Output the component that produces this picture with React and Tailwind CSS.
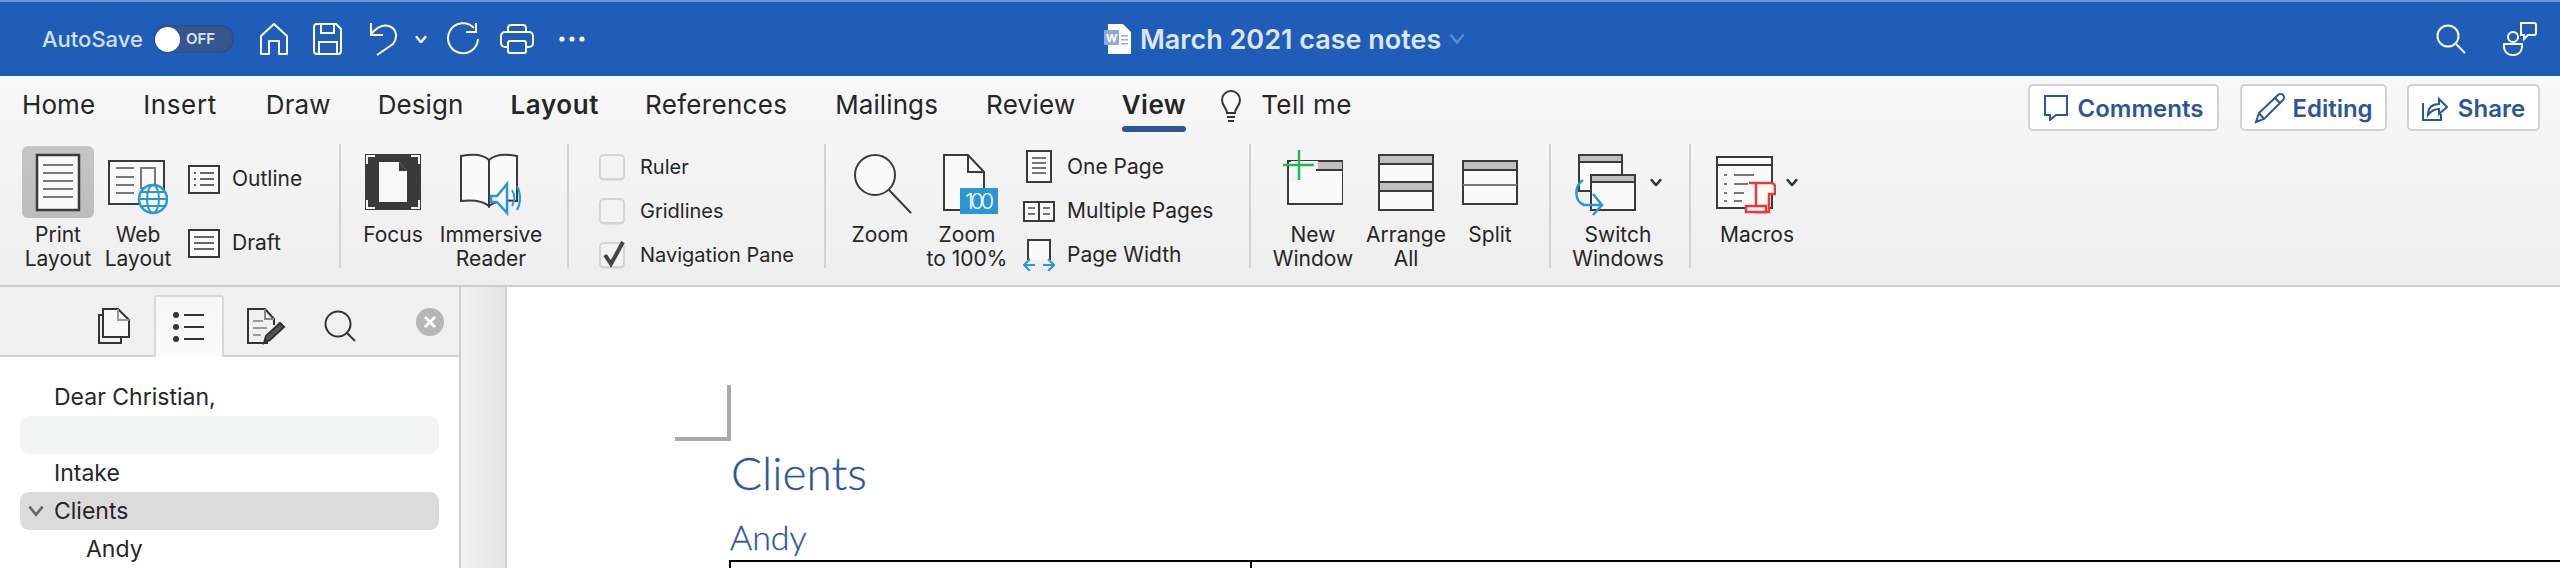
import React from 'react';

const ink = '#3a3a3a';
const blue = '#2a96d8';

function Icon({ w, h = 72, children, className = '' }) {
  return (
    <svg width={w} height={h} viewBox={`0 0 ${w} ${h}`} fill="none" className={`shrink-0 ${className}`}>
      {children}
    </svg>
  );
}

function Chevron({ size = 12, color = '#333', width = 2.5 }) {
  return (
    <svg width={size} height={size * 0.7} viewBox="0 0 12 8" fill="none" className="shrink-0">
      <path d="M1 1l5 6 5-6" stroke={color} strokeWidth={width} />
    </svg>
  );
}

function Separator({ className = '' }) {
  return <div className={`w-[2px] h-[124px] bg-[#d2d2d2] shrink-0 ${className}`} />;
}

// big ribbon button: icon on top, one or two label lines below
function BigButton({ width, lines, selected, children }) {
  return (
    <div className={`flex flex-col items-center shrink-0 ${width}`}>
      <div className={`h-[72px] mt-[2px] flex items-center justify-center rounded-[6px] ${selected ? 'w-[72px] bg-gradient-to-b from-[#c6c6c6] to-[#bcbcbc]' : ''}`}>
        {children}
      </div>
      <div className="mt-[5px] text-center text-[21px] leading-[24px] text-[#262626]">
        {lines.map((l) => (
          <div key={l} className="whitespace-nowrap">{l}</div>
        ))}
      </div>
    </div>
  );
}

function SmallRow({ icon, label, className = '' }) {
  return (
    <div className={`flex items-center h-[44px] ${className}`}>
      <div className="w-[38px] flex justify-center shrink-0">{icon}</div>
      <span className="ml-[9px] text-[21px] text-[#262626] whitespace-nowrap">{label}</span>
    </div>
  );
}

function CheckRow({ label, checked }) {
  return (
    <div className="flex items-center h-[44px]">
      <div className="relative w-[26px] h-[26px] rounded-[5px] border-2 border-[#d4d4d4] bg-[#f3f3f3] shadow-[0_1px_1px_#ddd] shrink-0">
        {checked && (
          <svg width="28" height="32" viewBox="0 0 28 32" fill="none" className="absolute left-[-1px] top-[-7px]">
            <path d="M5 18l6 9L23 5" stroke="#444" strokeWidth="4" />
          </svg>
        )}
      </div>
      <span className="ml-[15px] text-[20px] text-[#262626] whitespace-nowrap">{label}</span>
    </div>
  );
}

function TitleBar() {
  return (
    <div className="h-[76px] bg-[#1f5db8] border-t-2 border-[#6b96d4] flex items-center text-white shrink-0">
      <span className="ml-[42px] text-[22px] font-medium text-[#d4e0f3]">AutoSave</span>
      <div className="ml-[11px] w-[80px] h-[28px] rounded-full bg-[#35578d] flex items-center pl-[1px] shadow-[inset_0_0_2px_#1c3360]">
        <div className="w-[25px] h-[25px] rounded-full bg-white" />
        <span className="ml-[6px] text-[15px] font-semibold text-[#dbe4f2]">OFF</span>
      </div>

      {/* quick access */}
      <svg width="32" height="34" viewBox="0 0 32 34" fill="none" stroke="#fff" strokeWidth="2" className="ml-[24px]">
        <path d="M3 32V14L16 2l13 12v18h-8V19h-10v13z" strokeLinejoin="round" />
      </svg>
      <svg width="30" height="32" viewBox="0 0 30 32" fill="none" stroke="#fff" strokeWidth="2" className="ml-[23px]">
        <path d="M3 1h20l5 5v22a3 3 0 01-3 3H4a3 3 0 01-3-3V4a3 3 0 012-3z" />
        <path d="M8 1v9h13V1M6 31V19h18v12" />
      </svg>
      <svg width="30" height="34" viewBox="0 0 30 34" fill="none" stroke="#fff" strokeWidth="2" className="ml-[26px]">
        <path d="M2 1v12h12M2 12C8 5 14 2 20 4c8 3 9 12 4 18L8 33" />
      </svg>
      <div className="ml-[16px]"><Chevron color="#fff" /></div>
      <svg width="34" height="34" viewBox="0 0 34 34" fill="none" stroke="#fff" strokeWidth="2" className="ml-[19px]">
        <path d="M28 6A15 15 0 1032 17M30 1v9h-10" />
      </svg>
      <svg width="34" height="30" viewBox="0 0 34 30" fill="none" stroke="#fff" strokeWidth="2" className="ml-[20px]">
        <path d="M8 8V4a3 3 0 013-3h12a3 3 0 013 3v4" />
        <path d="M8 23H5a4 4 0 01-4-4V12a4 4 0 014-4h24a4 4 0 014 4v7a4 4 0 01-4 4h-3" />
        <rect x="8" y="17" width="18" height="12" rx="2" />
      </svg>
      <svg width="26" height="6" viewBox="0 0 26 6" fill="#fff" className="ml-[25px]">
        <circle cx="3" cy="3" r="2.6" /><circle cx="13" cy="3" r="2.6" /><circle cx="23" cy="3" r="2.6" />
      </svg>

      {/* document title */}
      <svg width="28" height="30" viewBox="0 0 28 30" className="ml-[519px]">
        <path d="M4 0h15l8 8v22H4z" fill="#fff" />
        <rect x="0" y="6" width="15" height="15" rx="1" fill="#8ea9dc" />
        <rect x="17" y="11" width="7" height="1.5" fill="#8ea9dc" />
        <rect x="17" y="15" width="7" height="1.5" fill="#8ea9dc" />
        <rect x="17" y="19" width="7" height="1.5" fill="#8ea9dc" />
        <text x="2" y="18" fontSize="11" fontWeight="700" fill="#fff" fontFamily="Inter, sans-serif">W</text>
      </svg>
      <span className="ml-[8px] mt-[2px] text-[27px] font-semibold text-[#dde6f5] whitespace-nowrap">March 2021 case notes</span>
      <div className="ml-[8px]"><Chevron size={16} color="#5d8bd0" width={1.8} /></div>

      <div className="ml-auto flex items-center">
        <svg width="30" height="30" viewBox="0 0 30 30" fill="none" stroke="#fff" strokeWidth="2">
          <circle cx="12" cy="12" r="10.5" /><path d="M20 20l9 9" />
        </svg>
        <svg width="34" height="34" viewBox="0 0 34 34" fill="none" stroke="#fff" strokeWidth="2" className="ml-[37px] mr-[23px]">
          <circle cx="10" cy="15" r="5" />
          <path d="M1 22h18v3a8 8 0 01-8 8H9a8 8 0 01-8-8z" />
          <path d="M18 1h13a2 2 0 012 2v8a2 2 0 01-2 2h-6l-4 4v-4h-3z" />
        </svg>
      </div>
    </div>
  );
}

function Tabs() {
  const tabs = [
    ['Home', 'ml-[22px]'],
    ['Insert', 'ml-[48px] tracking-[0.6px]'],
    ['Draw', 'ml-[49px]'],
    ['Design', 'ml-[47px]'],
    ['Layout', 'ml-[47px] font-semibold tracking-[0.6px]'],
    ['References', 'ml-[46px] tracking-[0.3px]'],
    ['Mailings', 'ml-[48px]'],
    ['Review', 'ml-[48px] tracking-[0.3px]'],
  ];
  return (
    <div className="h-[60px] flex items-start text-[26px] tracking-[0.1px] leading-[58px] text-[#262626]">
      {tabs.map(([t, c]) => (
        <span key={t} className={c}>{t}</span>
      ))}
      <div className="ml-[46px] relative font-semibold tracking-[0.5px]">
        View
        <div className="absolute left-0 right-0 top-[50px] h-[6px] rounded-full bg-[#2b579a]" />
      </div>
      <svg width="22" height="32" viewBox="0 0 22 32" fill="none" stroke="#333" strokeWidth="2" className="ml-[34px] mt-[14px]">
        <path d="M7 23c0-5-5-7-5-13a9 9 0 0118 0c0 6-5 8-5 13z" fill="#fafafa" />
        <path d="M7 27h8M8 31h6" />
      </svg>
      <span className="ml-[19px] tracking-[0.4px]">Tell me</span>

      <div className="ml-auto flex mr-[20px] mt-[8px] text-[24px] tracking-normal font-semibold leading-none text-[#2b579a]">
        <div className="w-[191px] h-[47px] rounded-[5px] border-2 border-[#d2d2d2] bg-white flex items-center justify-center gap-[10px]">
          <svg width="24" height="26" viewBox="0 0 24 26" fill="none" stroke="#2b579a" strokeWidth="2">
            <path d="M1 1h22v19H12l-6 5v-5H1z" />
          </svg>
          <span className="mt-[3px]">Comments</span>
        </div>
        <div className="ml-[21px] w-[147px] h-[47px] rounded-[5px] border-2 border-[#d2d2d2] bg-white flex items-center justify-center gap-[6px]">
          <svg width="32" height="32" viewBox="0 0 32 32" fill="none" stroke="#2b579a" strokeWidth="2">
            <path d="M2 30l3-9L24 3a3 3 0 015 5L10 27zM5 21l5 6M21 6l5 5" />
          </svg>
          <span className="mt-[3px]">Editing</span>
        </div>
        <div className="ml-[20px] w-[133px] h-[47px] rounded-[5px] border-2 border-[#d2d2d2] bg-white flex items-center justify-center gap-[10px]">
          <svg width="26" height="26" viewBox="0 0 26 26" fill="none" stroke="#2b579a" strokeWidth="2">
            <path d="M1 8v17h18v-6" />
            <path d="M6 20c0-7 4-11 11-11V4l8 8-8 7v-5c-5 0-8 2-11 6z" />
          </svg>
          <span className="mt-[3px]">Share</span>
        </div>
      </div>
    </div>
  );
}

function Ribbon() {
  return (
    <div className="h-[211px] shrink-0 bg-gradient-to-b from-[#f8f8f8] to-[#eeeeee] border-b-2 border-[#cdcdcd]">
      <Tabs />
      <div className="mt-[8px] pl-[22px] flex items-start">
        <BigButton width="w-[72px]" lines={['Print', 'Layout']} selected>
          <Icon w={46}>
            <rect x="2" y="9" width="42" height="55" fill="#fafafa" stroke={ink} strokeWidth="2.5" />
            <path d="M8 19h30M8 27h30M8 35h30M8 43h30M8 51h30" stroke="#777" strokeWidth="2" />
          </Icon>
        </BigButton>
        <BigButton width="w-[88px]" lines={['Web', 'Layout']}>
          <Icon w={60}>
            <rect x="1" y="15" width="55" height="43" fill="#fafafa" stroke={ink} strokeWidth="2" />
            <path d="M8 22h18M8 31h18M8 39h18M8 47h18" stroke="#777" strokeWidth="2" />
            <rect x="33" y="22" width="14" height="20" stroke="#777" strokeWidth="2" />
            <circle cx="45" cy="53" r="14" fill="#fafafa" stroke={blue} strokeWidth="2.5" />
            <ellipse cx="45" cy="53" rx="6" ry="14" stroke={blue} strokeWidth="2" />
            <path d="M31 53h28M33 46h24M33 60h24" stroke={blue} strokeWidth="2" />
          </Icon>
        </BigButton>
        <div className="ml-[6px] w-[151px] text-[21px] text-[#262626]">
          <div className="flex items-center h-[44px] mt-[13px]">
            <svg width="32" height="29" viewBox="0 0 32 29" fill="none">
              <rect x="1" y="1" width="30" height="27" fill="#fafafa" stroke={ink} strokeWidth="2" />
              <path d="M6 8h2M12 8h14M6 14h2M12 14h14M6 20h2M12 20h14" stroke="#666" strokeWidth="2" />
            </svg>
            <span className="ml-[12px]">Outline</span>
          </div>
          <div className="flex items-center h-[44px] mt-[20px]">
            <svg width="32" height="29" viewBox="0 0 32 29" fill="none">
              <rect x="1" y="1" width="30" height="27" fill="#fafafa" stroke={ink} strokeWidth="2" />
              <path d="M6 8h20M6 14h20M6 20h20" stroke="#666" strokeWidth="2" />
            </svg>
            <span className="ml-[12px]">Draft</span>
          </div>
        </div>
        <Separator />

        <BigButton width="w-[104px]" lines={['Focus']}>
          <Icon w={56}>
            <rect x="0" y="8" width="56" height="56" fill={ink} />
            <path d="M2 18v-8h8M46 10h8v8M2 54v8h8M54 54v8h-8" stroke="#f4f4f4" strokeWidth="2" />
            <path d="M14 16h20l8 9v31H14z" fill="#f8f8f8" />
            <path d="M34 16v9h8z" fill={ink} />
          </Icon>
        </BigButton>
        <BigButton width="w-[92px]" lines={['Immersive', 'Reader']}>
          <Icon w={64}>
            <path d="M2 10c10-2 22-2 28 4v46c-6-5-18-6-28-5z" fill="#fafafa" stroke={ink} strokeWidth="2" />
            <path d="M58 10c-10-2-22-2-28 4v46c6-5 18-6 28-5z" fill="#fafafa" stroke={ink} strokeWidth="2" />
            <path d="M32 50h6l10-12v29l-10-11h-6z" fill="#fafafa" stroke={blue} strokeWidth="2.5" />
            <path d="M53 44c3 5 3 11 0 16M58 40c4 7 4 17 0 24" stroke={blue} strokeWidth="2" />
          </Icon>
        </BigButton>
        <div className="w-[30px] shrink-0" />
        <Separator />

        <div className="pl-[30px] w-[255px] pt-[1px] shrink-0">
          <CheckRow label="Ruler" />
          <CheckRow label="Gridlines" />
          <CheckRow label="Navigation Pane" checked />
        </div>
        <Separator />

        <BigButton width="w-[108px]" lines={['Zoom']}>
          <Icon w={66}>
            <circle cx="28" cy="29" r="20" fill="#fafafa" stroke={ink} strokeWidth="2" />
            <path d="M42 44l22 23" stroke={ink} strokeWidth="2" />
          </Icon>
        </BigButton>
        <BigButton width="w-[66px]" lines={['Zoom', 'to 100%']}>
          <Icon w={62}>
            <path d="M8 9h24l16 17v38H8z" fill="#fafafa" stroke={ink} strokeWidth="2" />
            <path d="M32 9v17h16" stroke={ink} strokeWidth="2" />
            <rect x="24" y="42" width="38" height="26" fill={blue} />
            <text x="29" y="63" fontSize="22" fontWeight="300" fill="#fff" fontFamily="Inter, sans-serif" textLength="29">100</text>
          </Icon>
        </BigButton>
        <div className="ml-[20px] w-[229px] shrink-0 pt-[1px]">
          <SmallRow
            label="One Page"
            icon={
              <svg width="26" height="34" viewBox="0 0 26 34" fill="none">
                <rect x="1" y="1" width="24" height="31" fill="#fafafa" stroke={ink} strokeWidth="2" />
                <path d="M6 8h14M6 13h14M6 18h14M6 23h14" stroke="#777" strokeWidth="2" />
              </svg>
            }
          />
          <SmallRow
            label="Multiple Pages"
            icon={
              <svg width="32" height="21" viewBox="0 0 32 21" fill="none">
                <rect x="1" y="1" width="30" height="19" fill="#fafafa" stroke={ink} strokeWidth="2" />
                <path d="M16 1v19" stroke={ink} strokeWidth="2" />
                <path d="M5 7h7M5 13h7M20 7h7M20 13h7" stroke="#777" strokeWidth="2" />
              </svg>
            }
          />
          <SmallRow
            label="Page Width"
            icon={
              <svg width="32" height="32" viewBox="0 0 32 32" fill="none">
                <path d="M5 21V1h22v20" fill="#fafafa" stroke={ink} strokeWidth="2" />
                <path d="M1 26h11M20 26h11M7 20l-6 6 6 6M25 20l6 6-6 6" stroke={blue} strokeWidth="2" />
              </svg>
            }
          />
        </div>
        <Separator />

        <BigButton width="w-[124px]" lines={['New', 'Window']}>
          <Icon w={60}>
            <rect x="5" y="15" width="55" height="43" fill="#fafafa" stroke={ink} strokeWidth="2" />
            <rect x="34" y="15" width="26" height="9" fill="#c0c0c0" stroke={ink} strokeWidth="2" />
            <path d="M-1 15h36v8H16v13H8V15z" fill="#f4f4f4" />
            <path d="M0 19h31M16 4v30" stroke="#1eb85a" strokeWidth="2.5" />
          </Icon>
        </BigButton>
        <BigButton width="w-[62px]" lines={['Arrange', 'All']}>
          <Icon w={56}>
            <rect x="1" y="9" width="54" height="55" fill="#fafafa" stroke={ink} strokeWidth="2" />
            <rect x="1" y="9" width="54" height="9" fill="#c0c0c0" stroke={ink} strokeWidth="2" />
            <rect x="1" y="36" width="54" height="9" fill="#c0c0c0" stroke={ink} strokeWidth="2" />
          </Icon>
        </BigButton>
        <BigButton width="w-[106px]" lines={['Split']}>
          <Icon w={56}>
            <rect x="1" y="15" width="54" height="43" fill="#fafafa" stroke={ink} strokeWidth="2" />
            <rect x="1" y="15" width="54" height="9" fill="#c0c0c0" stroke={ink} strokeWidth="2" />
            <path d="M1 39h54" stroke="#777" strokeWidth="2" />
          </Icon>
        </BigButton>
        <Separator className="ml-[6px]" />

        <BigButton width="w-[134px]" lines={['Switch', 'Windows']}>
          <div className="flex items-center">
            <Icon w={62}>
              <rect x="5" y="9" width="43" height="36" fill="#fafafa" stroke={ink} strokeWidth="2" />
              <rect x="5" y="9" width="43" height="7" fill="#c0c0c0" stroke={ink} strokeWidth="2" />
              <rect x="17" y="29" width="44" height="35" fill="#fafafa" stroke={ink} strokeWidth="2" />
              <rect x="17" y="29" width="44" height="7" fill="#c0c0c0" stroke={ink} strokeWidth="2" />
              <path d="M9 34c-9 6-9 21 1 25h17M19 48l9 11-9 10" stroke={blue} strokeWidth="2.5" fill="none" />
            </Icon>
            <div className="ml-[14px]"><Chevron /></div>
          </div>
        </BigButton>
        <Separator className="ml-[4px]" />

        <BigButton width="w-[132px]" lines={['Macros']}>
          <div className="flex items-center">
            <Icon w={60}>
              <rect x="1" y="11" width="55" height="51" fill="#fafafa" stroke={ink} strokeWidth="2" />
              <path d="M1 19h55" stroke={ink} strokeWidth="2" />
              <path d="M8 29h3M18 29h20M8 38h3M18 38h14M8 47h3M18 47h10M8 55h3M18 55h8" stroke="#777" strokeWidth="2" />
              <path d="M33 37h22a4 4 0 014 4v7h-6v18H40V38" fill="#fafafa" stroke="#e8383d" strokeWidth="2.5" />
              <path d="M30 60h20v6H30z" fill="#fafafa" stroke="#e8383d" strokeWidth="2.5" />
            </Icon>
            <div className="ml-[10px]"><Chevron /></div>
          </div>
        </BigButton>
      </div>
    </div>
  );
}

function NavPane() {
  return (
    <div className="w-[461px] shrink-0 border-r-2 border-[#cdcdcd] flex flex-col">
      <div className="h-[70px] shrink-0 bg-[#f0f0f0] border-b-2 border-[#d2d2d2] flex items-end pl-[97px] relative">
        <svg width="34" height="38" viewBox="0 0 34 38" fill="none" stroke="#333" strokeWidth="2" className="mb-[10px]">
          <path d="M6 30V2h15l11 11v17z" fill="#f8f8f8" />
          <path d="M21 2v11h11" stroke="#999" />
          <path d="M6 8H2v28h22v-6" />
        </svg>
        <div className="ml-[23px] w-[70px] h-[62px] mb-[-2px] bg-gradient-to-b from-[#f6f6f6] to-[#fbfbfb] border-2 border-b-0 border-[#d8d8d8] rounded-t-[3px] flex items-center justify-center">
          <svg width="32" height="32" viewBox="0 0 32 32" fill="#333">
            <circle cx="3" cy="4" r="3" /><circle cx="3" cy="16" r="3" /><circle cx="3" cy="28" r="3" />
            <rect x="11" y="3" width="20" height="2" /><rect x="11" y="15" width="20" height="2" /><rect x="11" y="27" width="20" height="2" />
          </svg>
        </div>
        <svg width="40" height="38" viewBox="0 0 40 38" fill="none" stroke="#333" strokeWidth="2" className="ml-[22px] mb-[10px]">
          <path d="M22 36H2V2h17l9 10v6" />
          <path d="M19 2v10h9" stroke="#888" />
          <path d="M7 14h10M7 21h14M7 28h8" stroke="#999" />
          <path d="M18 36l2-7 14-13 4 4-14 13z" fill="#555" />
        </svg>
        <svg width="32" height="32" viewBox="0 0 32 32" fill="none" stroke="#333" strokeWidth="2" className="ml-[38px] mb-[13px]">
          <circle cx="14" cy="14" r="12.5" /><path d="M23 23l8 8" />
        </svg>
        <div className="absolute left-[416px] top-[21px] w-[28px] h-[28px] rounded-full bg-[#b6b6b6] flex items-center justify-center">
          <svg width="14" height="14" viewBox="0 0 14 14" stroke="#fff" strokeWidth="3"><path d="M2 2l10 10M12 2L2 12" /></svg>
        </div>
      </div>
      <div className="pt-[21px] px-[20px] bg-white text-[23px] leading-[38px] text-[#262626]">
        <div className="pl-[34px]">Dear Christian,</div>
        <div className="h-[38px] rounded-[9px] bg-[#f3f4f4]" />
        <div className="pl-[34px]">Intake</div>
        <div className="h-[38px] rounded-[9px] bg-[#dbdbdb] flex items-center pl-[8px]">
          <Chevron size={16} color="#666" width={2} />
          <span className="ml-[10px]">Clients</span>
        </div>
        <div className="pl-[66px]">Andy</div>
      </div>
    </div>
  );
}

function Page() {
  return (
    <div className="flex-1 bg-white relative overflow-hidden pl-[222px] border-l-2 border-[#d0d0d0]">
      {/* crop mark */}
      <div className="absolute left-[168px] top-[98px] w-[56px] h-[56px] border-r-[4px] border-b-[4px] border-[#a9a9a9]" />
      <div className="pt-[156px] text-[#2b579a] font-['Lato',sans-serif] font-light [-webkit-text-stroke:0.3px_#2b579a]">
        <div className="pl-[2px] text-[46px] leading-[60px]">Clients</div>
        <div className="pl-[1px] text-[34px] leading-[44px] mt-[12px]">Andy</div>
        <div className="h-[40px] mt-[1px] border-t-2 border-l-2 border-black flex">
          <div className="w-[521px] border-r-2 border-black" />
        </div>
      </div>
    </div>
  );
}

export default function App() {
  return (
    <div className="w-[2560px] h-[568px] overflow-hidden flex flex-col bg-white font-['Inter',sans-serif]">
      <TitleBar />
      <Ribbon />
      <div className="flex flex-1 min-h-0">
        <NavPane />
        <div className="w-[44px] shrink-0 bg-gradient-to-r from-[#f1f1f1] to-[#e4e4e4]" />
        <Page />
      </div>
    </div>
  );
}
